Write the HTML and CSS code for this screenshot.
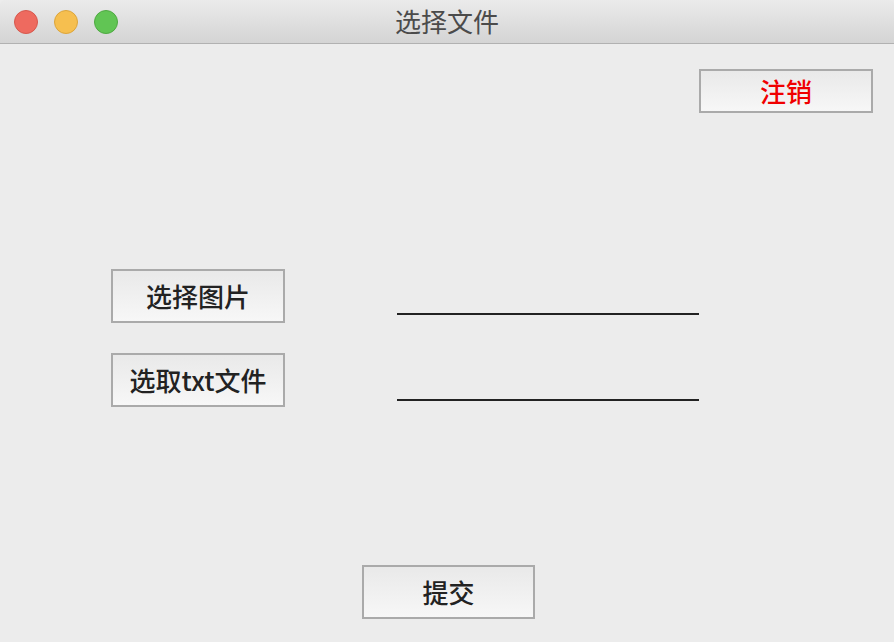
FILE: index.html
```html
<!DOCTYPE html>
<html lang="zh-CN">
<head>
  <meta charset="UTF-8" />
  <title>选择文件</title>
  <link rel="stylesheet" href="styles.css">
</head>
<body>

  <!-- Title bar -->
  <div class="titlebar">
    <div class="lights">
      <span class="light red"></span>
      <span class="light yellow"></span>
      <span class="light green"></span>
    </div>
    <div class="title">选择文件</div>
  </div>

  <!-- Top right logout -->
  <div class="toolbar">
    <button class="btn cancel">注销</button>
  </div>

  <!-- File rows -->
  <div class="rows">
    <div class="row">
      <button class="btn pick">选择图片</button>
      <div class="line"></div>
    </div>
    <div class="row">
      <button class="btn pick">选取txt文件</button>
      <div class="line low"></div>
    </div>
  </div>

  <!-- Submit -->
  <div class="footer">
    <button class="btn submit">提交</button>
  </div>

</body>
</html>
```

FILE: styles.css
```css
/* Basic reset */
* {
  margin: 0;
  padding: 0;
  box-sizing: border-box;
}

body {
  font-family: "Noto Sans CJK SC", "Noto Sans", sans-serif;
  background-color: #ececec;
  width: 894px;
  height: 642px;
  overflow: hidden;
}

/* Title bar */
.titlebar {
  position: relative;
  height: 44px;
  background: linear-gradient(#ebebeb, #d4d4d4);
  border-bottom: 1px solid #b1b1b1;
  border-radius: 5px 5px 0 0;
  display: flex;
  align-items: center;
  justify-content: center;
}
.lights {
  position: absolute;
  left: 14px;
  top: 10px;
  display: flex;
  gap: 16px;
}
.light {
  width: 24px;
  height: 24px;
  border-radius: 50%;
  border: 1px solid;
}
.red {
  background: #ee6a5f;
  border-color: #d6584d;
}
.yellow {
  background: #f6bf4f;
  border-color: #dca53b;
}
.green {
  background: #61c554;
  border-color: #4fa942;
}
.title {
  font-size: 26px;
  color: #4b4b4b;
  line-height: 1;
  margin-top: -1px;
}

/* Buttons */
.btn {
  font-family: inherit;
  font-size: 26px;
  font-weight: 500;
  color: #222;
  background: linear-gradient(#e9e9e9, #f7f7f7);
  border: 2px solid #aaaaaa;
  display: flex;
  align-items: center;
  justify-content: center;
  line-height: 1;
}

.toolbar {
  display: flex;
  justify-content: flex-end;
  padding: 25px 21px 0 0;
}
.cancel {
  width: 174px;
  height: 44px;
  color: #f00000;
}

/* Rows */
.rows {
  margin-top: 156px;
  padding-left: 111px;
  display: flex;
  flex-direction: column;
  gap: 30px;
}
.row {
  display: flex;
  align-items: flex-start;
}
.pick {
  width: 174px;
  height: 54px;
}
.line {
  width: 302px;
  height: 2px;
  background: #222;
  margin-left: 112px;
  margin-top: 44px;
}
.line.low {
  margin-top: 46px;
}

/* Submit */
.footer {
  margin-top: 158px;
  padding-left: 362px;
}
.submit {
  width: 173px;
  height: 54px;
}
```
